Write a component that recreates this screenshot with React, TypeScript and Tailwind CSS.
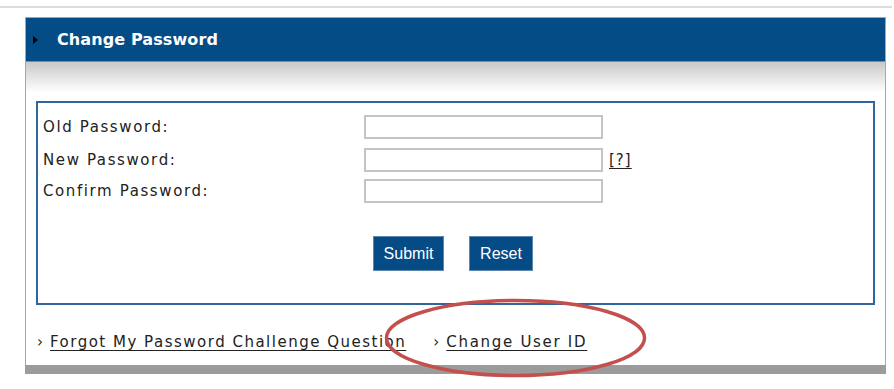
import React from "react";

export default function App() {
  const label = "text-[15px] tracking-[1.6px] text-[#222]";
  const link = "text-[15px] tracking-[1.5px] text-[#222]";
  return (
    <div className="relative w-[894px] h-[389px] overflow-hidden bg-white font-['DejaVu_Sans',Verdana,sans-serif]">
      <div className="pt-[6px]">
        <div className="h-[2px] bg-[#dcdcdc] mr-[2px]" />
      </div>
      <div className="ml-[25px] mt-[9px] w-[861px] border-x border-t border-[#a6a6a6]">
        {/* header */}
        <div className="h-[44px] bg-[#044c86] flex items-center border-b border-[#7d8d9c]">
          <span className="ml-[7px] w-0 h-0 border-y-[4px] border-y-transparent border-l-[5px] border-l-black" />
          <span className="ml-[19px] text-white text-[16px] font-bold leading-none tracking-[0.1px]">Change Password</span>
        </div>
        <div className="h-[39px] bg-[linear-gradient(#c9c9c9,#ffffff_78%)]" />
        {/* form box */}
        <div className="mx-[10px] border-2 border-[#2f679d] pl-[5px] pt-[12px] pb-[32px]">
          <div className="flex items-center h-[24px]">
            <div className={`w-[321px] ${label}`}>Old Password:</div>
            <input className="w-[239px] h-[24px] border-2 border-[#c4c4c4] bg-white" />
          </div>
          <div className="flex items-center h-[24px] mt-[9px]">
            <div className={`w-[321px] ${label}`}>New Password:</div>
            <input className="w-[239px] h-[24px] border-2 border-[#c4c4c4] bg-white" />
            <a className="ml-[6px] text-[15px] tracking-[1px] text-[#222] underline underline-offset-[3px]">[?]</a>
          </div>
          <div className="flex items-center h-[24px] mt-[7px]">
            <div className={`w-[321px] ${label}`}>Confirm Password:</div>
            <input className="w-[239px] h-[24px] border-2 border-[#c4c4c4] bg-white" />
          </div>
          <div className="flex justify-center gap-[25px] mt-[33px] pr-[10px]">
            <button className="w-[71px] h-[35px] bg-[#054b86] border border-[#5f86ad] text-white text-[16px] font-['Liberation_Sans',Arial,sans-serif]">
              Submit
            </button>
            <button className="w-[64px] h-[35px] bg-[#054b86] border border-[#5f86ad] text-white text-[16px] font-['Liberation_Sans',Arial,sans-serif]">
              Reset
            </button>
          </div>
        </div>
        {/* links */}
        <div className="h-[60px] pt-[14px] flex items-center pl-[11px]">
          <span className={`w-[13px] ${link}`}>›</span>
          <a className={`${link} underline underline-offset-[3px]`}>Forgot My Password Challenge Question</a>
          <span className={`ml-[27px] w-[13px] ${link}`}>›</span>
          <a className="text-[15px] tracking-[1.7px] text-[#222] underline underline-offset-[3px]">Change User ID</a>
        </div>
        <div className="h-[9px] bg-[#9b9b9b] -mx-px" />
      </div>
      <svg className="absolute left-0 top-0 pointer-events-none" width="894" height="389">
        <ellipse cx="515.5" cy="338" rx="129" ry="37.5" fill="none" stroke="#c4504e" strokeWidth="3.5" />
      </svg>
    </div>
  );
}
